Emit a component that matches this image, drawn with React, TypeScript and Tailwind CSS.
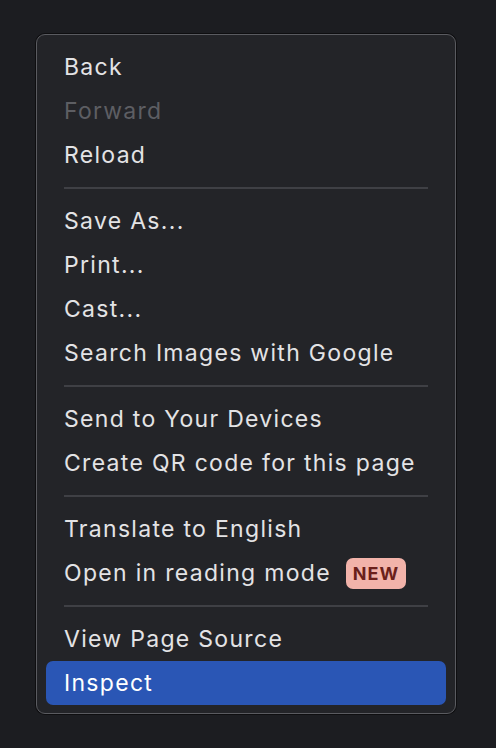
import React from "react";

type Item = { label: string; disabled?: boolean; badge?: string; active?: boolean };

const groups: Item[][] = [
  [{ label: "Back" }, { label: "Forward", disabled: true }, { label: "Reload" }],
  [{ label: "Save As..." }, { label: "Print..." }, { label: "Cast..." }, { label: "Search Images with Google" }],
  [{ label: "Send to Your Devices" }, { label: "Create QR code for this page" }],
  [{ label: "Translate to English" }, { label: "Open in reading mode", badge: "NEW" }],
  [{ label: "View Page Source" }, { label: "Inspect", active: true }],
];

export default function App() {
  return (
    <div className="w-[496px] h-[748px] bg-[#1c1d21] pt-[34px] pl-[36px]" style={{ fontFamily: "Inter, 'Noto Sans', sans-serif" }}>
      <div className="w-[420px] rounded-[9px] border border-[#5a5b60] bg-[#232428] pt-[10px] pb-[8px] px-[9px] shadow-[0_0_0_1px_#0e0e10]">
        {groups.map((g, gi) => (
          <div key={gi}>
            {gi > 0 && (
              <div className="h-[22px] flex items-center px-[18px]">
                <div className="h-[2px] w-full bg-[#3f4045]" />
              </div>
            )}
            {g.map((it) => (
              <div
                key={it.label}
                className={
                  "h-[44px] flex items-center pl-[18px] rounded-[7px] text-[23px] tracking-[1.3px] " +
                  (it.active ? "bg-[#2a56b5] text-white" : it.disabled ? "text-[#5d5e63]" : "text-[#e3e3e5]")
                }
              >
                <span>{it.label}</span>
                {it.badge && (
                  <span className="ml-[15px] h-[31px] px-[7px] flex items-center rounded-[7px] bg-[#f2b3aa] text-[#6a1f1b] text-[18px] font-bold tracking-[1px]">
                    {it.badge}
                  </span>
                )}
              </div>
            ))}
          </div>
        ))}
      </div>
    </div>
  );
}
